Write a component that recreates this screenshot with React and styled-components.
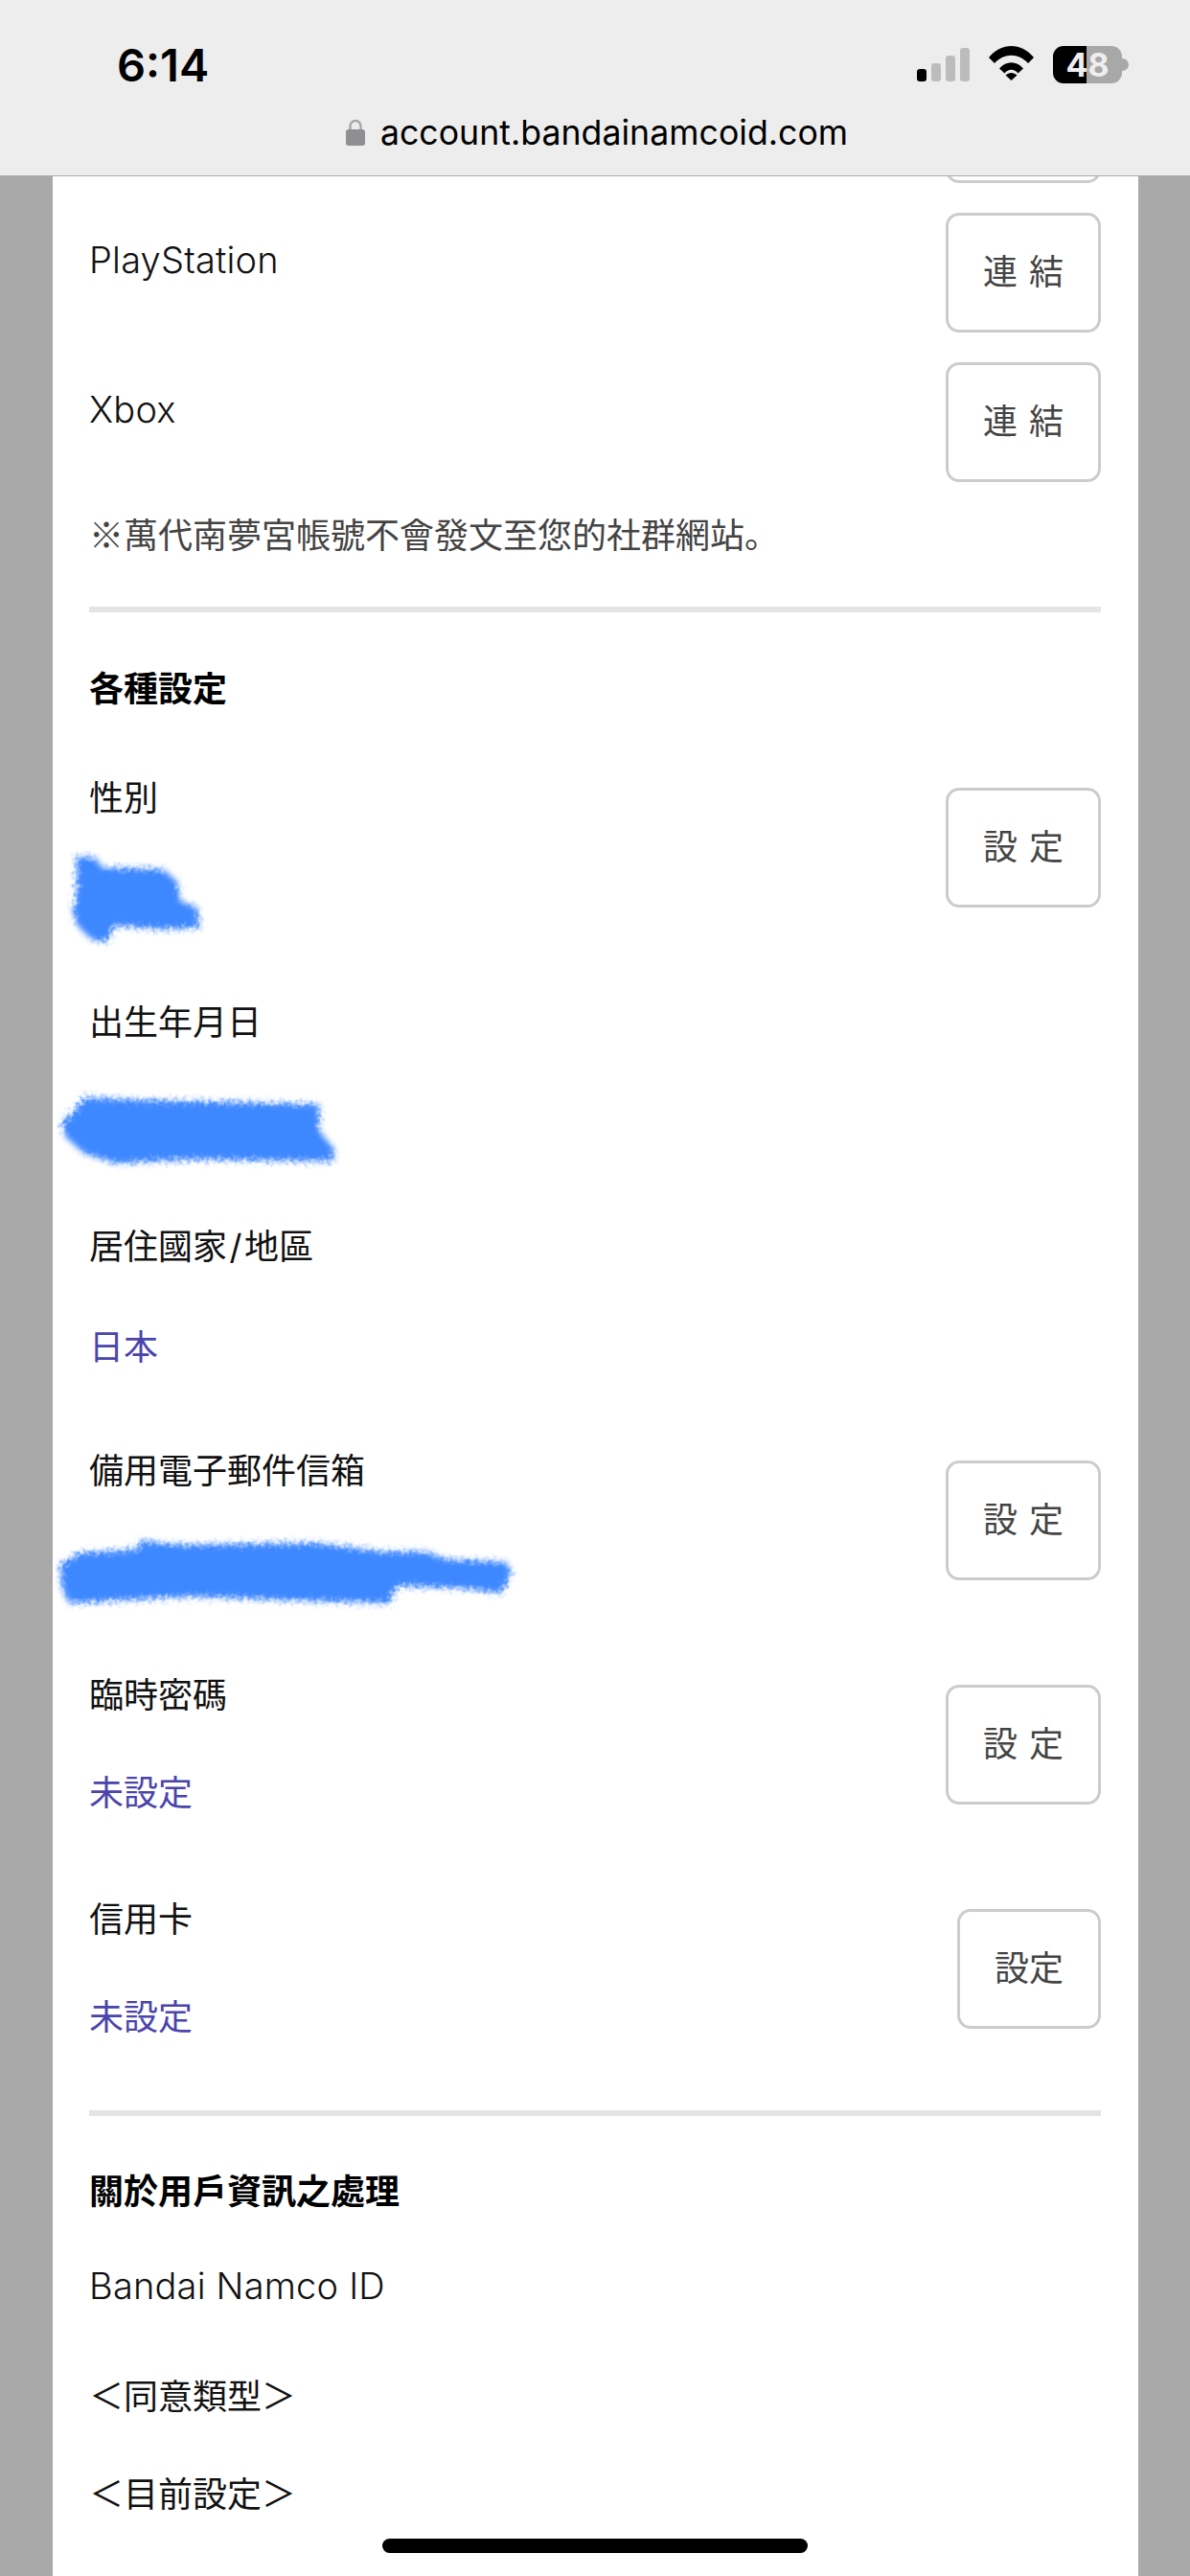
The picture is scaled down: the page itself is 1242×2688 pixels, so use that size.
import React from 'react';
import styled, { createGlobalStyle } from 'styled-components';

const Global = createGlobalStyle`
  html, body { margin: 0; padding: 0; background: #a9a9a9; }
  body { font-family: "Noto Sans CJK JP", "Noto Sans CJK TC", sans-serif; }
  * { box-sizing: border-box; }
`;

const Phone = styled.div`
  position: relative;
  width: 1242px;
  height: 2688px;
  overflow: hidden;
  display: flex;
  flex-direction: column;
  background: #a9a9a9;
`;

const TopBar = styled.header`
  flex: none;
  height: 184px;
  background: #ededed;
  border-bottom: 1px solid #aaa;
  display: flex;
  flex-direction: column;
`;

const StatusRow = styled.div`
  height: 120px;
  padding: 48px 64px 0 122px;
  display: flex;
  justify-content: space-between;
  align-items: flex-start;
`;

const Time = styled.div`
  font-family: Inter, sans-serif;
  font-size: 47px;
  font-weight: 600;
  line-height: 40px;
  color: #000;
`;

const StatusIcons = styled.div`
  display: flex;
  align-items: flex-start;
  gap: 20px;
`;

const Signal = styled.div`
  display: flex;
  align-items: flex-end;
  gap: 5px;
  height: 35px;
  margin-top: 2px;
`;

const Bar = styled.span`
  width: 10px;
  height: ${p => p.$h}px;
  border-radius: 3px;
  background: ${p => (p.$on ? '#000' : '#bcbcbc')};
`;

const Battery = styled.div`
  display: flex;
  align-items: center;
  width: 79px;
  height: 39px;
`;

const BatteryBody = styled.div`
  width: 72px;
  height: 39px;
  border-radius: 11px;
  overflow: hidden;
  background: linear-gradient(90deg, #000 0 35px, #a8a8a8 35px 72px);
  color: #eee;
  font-family: Inter, sans-serif;
  font-size: 34px;
  font-weight: 700;
  line-height: 39px;
  text-align: center;
`;

const BatteryNub = styled.span`
  width: 7px;
  height: 13px;
  border-radius: 0 7px 7px 0;
  background: #a8a8a8;
`;

const UrlRow = styled.div`
  display: flex;
  align-items: center;
  justify-content: center;
  gap: 16px;
  height: 40px;
  margin-top: -2px;
  padding-left: 4px;
`;

const Url = styled.span`
  font-family: Inter, sans-serif;
  font-size: 35.7px;
  line-height: 40px;
  color: #000;
`;

const Scroller = styled.main`
  flex: 1;
  min-height: 0;
  overflow: hidden;
  padding: 0 54px 0 55px;
`;

const Card = styled.div`
  background: #fff;
  padding: 0 39px 0 38px;
  min-height: 100%;
  font-size: 36px;
  line-height: 54px;
  color: #111;
`;

const ButtonRow = styled.div`
  display: flex;
  justify-content: space-between;
  align-items: flex-start;
  margin-top: 31px;
`;

const Clipped = styled.div`
  display: flex;
  justify-content: flex-end;
  height: 7px;
`;

const ClippedEdge = styled.div`
  flex: none;
  width: 162px;
  height: 125px;
  margin-top: -118px;
  border: 3px solid #ccc;
  border-radius: 14px;
`;

const LatinLabel = styled.div`
  font-family: Inter, sans-serif;
  font-size: 38px;
  font-weight: 300;
  letter-spacing: 0.2px;
  margin-top: ${p => p.$top}px;
`;

const Button = styled.button`
  flex: none;
  height: 125px;
  margin: ${p => p.$mt ?? 0}px 0 0;
  padding: 0 36px 8px;
  background: #fff;
  border: 3px solid #ccc;
  border-radius: 14px;
  color: #444;
  font-family: "Noto Sans CJK JP", sans-serif;
  font-size: 36px;
  line-height: 1;
  word-spacing: 4px;
  white-space: nowrap;
`;

const Note = styled.p`
  margin: 26px 0 0;
  color: #444;
`;

const Divider = styled.hr`
  border: 0;
  height: 6px;
  background: #e4e4e4;
  margin: ${p => p.$top}px 0 0;
`;

const Heading = styled.h2`
  margin: ${p => p.$top}px 0 0;
  font-size: 36px;
  line-height: 54px;
  font-weight: 700;
  color: #000;
`;

const FieldList = styled.div`
  display: flex;
  flex-direction: column;
  gap: 78px;
  margin-top: 60px;
`;

const Field = styled.div`
  display: flex;
  justify-content: space-between;
  align-items: flex-start;
  height: 156px;
`;

const FieldText = styled.div`
  display: flex;
  flex-direction: column;
  gap: 48px;
`;

const Slash = styled.span`
  font-family: Inter, sans-serif;
  margin: 0 2.5px;
`;

const Value = styled.div`
  position: relative;
  height: 54px;
  color: #4a44ad;
`;

const ScribbleSvg = styled.svg`
  position: absolute;
  left: 0;
  top: 0;
  width: 600px;
  height: 120px;
  overflow: visible;
`;

const Plain = styled.p`
  margin: ${p => p.$top}px 0 0;
`;

const HomeIndicator = styled.div`
  position: absolute;
  left: 399px;
  top: 2649px;
  width: 444px;
  height: 15px;
  border-radius: 8px;
  background: #000;
`;

const FilterDefs = styled.svg`
  position: absolute;
  width: 0;
  height: 0;
`;

const Lock = () => (
  <svg width="20" height="28" viewBox="0 0 20 28" aria-hidden="true">
    <path d="M4.500 13V7.500a5.500 5.500 0 0 1 11 0V13" fill="none" stroke="#a5a5aa" strokeWidth="2.400" />
    <rect x="0" y="11" width="20" height="17" rx="3" fill="#8e8e93" />
  </svg>
);

const Wifi = () => (
  <svg width="47" height="36" viewBox="0 0 47 36" aria-hidden="true">
    <path d="M0 12C13-4 34-4 47 12L41 18C31 7 16 7 6 18Z" />
    <path d="M11 23.500C18 15 29 15 36 23.500L30.500 28.500C26.500 23.500 20.500 23.500 16.500 28.500Z" />
    <path d="M23.500 36L17.500 30.500C21 27 26 27 29.500 30.500Z" />
  </svg>
);

const Scribble = ({ top, points }) => (
  <ScribbleSvg viewBox={`93 ${top} 600 120`} aria-hidden="true">
    <polygon points={points} fill="#3d87ff" filter="url(#rough)" />
  </ScribbleSvg>
);

const blobA = '80,893 100,895 106,905 170,907 185,920 188,940 206,947 208,968 170,970 120,966 112,983 95,980 80,965 76,950 80,930';
const blobB = '87,1145 150,1148 333,1152 333,1180 348,1198 348,1212 200,1210 120,1214 87,1203 67,1185 65,1170 80,1157';
const blobC = '63,1632 85,1620 142,1617 146,1608 190,1612 330,1610 400,1619 445,1619 465,1627 528,1630 534,1640 523,1663 490,1658 415,1655 405,1673 300,1670 200,1666 72,1673 64,1655';

const fields = [
  { id: 'gender', label: '性別', blob: [905, blobA], action: '設 定' },
  { id: 'birth', label: '出生年月日', blob: [1139, blobB] },
  { id: 'region', label: <>居住國家<Slash>/</Slash>地區</>, value: '日本' },
  { id: 'mail', label: '備用電子郵件信箱', blob: [1607, blobC], action: '設 定' },
  { id: 'pass', label: '臨時密碼', value: '未設定', action: '設 定' },
  { id: 'card', label: '信用卡', value: '未設定', action: '設定' },
];

export default function App() {
  return (
    <Phone>
      <Global />
      <FilterDefs aria-hidden="true">
        <filter id="rough" x="-10%" y="-30%" width="120%" height="160%">
          <feGaussianBlur in="SourceGraphic" stdDeviation="3" result="soft" />
          <feTurbulence type="fractalNoise" baseFrequency="0.22" numOctaves="2" seed="4" result="noise" />
          <feDisplacementMap in="soft" in2="noise" scale="10" />
        </filter>
      </FilterDefs>
      <TopBar>
        <StatusRow>
          <Time>6:14</Time>
          <StatusIcons>
            <Signal>
              <Bar $h={13} $on />
              <Bar $h={19} />
              <Bar $h={27} />
              <Bar $h={35} />
            </Signal>
            <Wifi />
            <Battery>
              <BatteryBody>48</BatteryBody>
              <BatteryNub />
            </Battery>
          </StatusIcons>
        </StatusRow>
        <UrlRow>
          <Lock />
          <Url>account.bandainamcoid.com</Url>
        </UrlRow>
      </TopBar>
      <Scroller>
        <Card>
          <Clipped>
            <ClippedEdge />
          </Clipped>
          <ButtonRow>
            <LatinLabel $top={22}>PlayStation</LatinLabel>
            <Button>連 結</Button>
          </ButtonRow>
          <ButtonRow>
            <LatinLabel $top={22}>Xbox</LatinLabel>
            <Button>連 結</Button>
          </ButtonRow>
          <Note>※萬代南夢宮帳號不會發文至您的社群網站。</Note>
          <Divider $top={50} />
          <Heading $top={50}>各種設定</Heading>
          <FieldList>
            {fields.map(f => (
              <Field key={f.id}>
                <FieldText>
                  <div>{f.label}</div>
                  <Value>
                    {f.value}
                    {f.blob && <Scribble top={f.blob[0]} points={f.blob[1]} />}
                  </Value>
                </FieldText>
                {f.action && <Button $mt={19}>{f.action}</Button>}
              </Field>
            ))}
          </FieldList>
          <Divider $top={73} />
          <Heading $top={49}>關於用戶資訊之處理</Heading>
          <LatinLabel $top={47}>Bandai Namco ID</LatinLabel>
          <Plain $top={59}>＜同意類型＞</Plain>
          <Plain $top={48}>＜目前設定＞</Plain>
        </Card>
      </Scroller>
      <HomeIndicator />
    </Phone>
  );
}
